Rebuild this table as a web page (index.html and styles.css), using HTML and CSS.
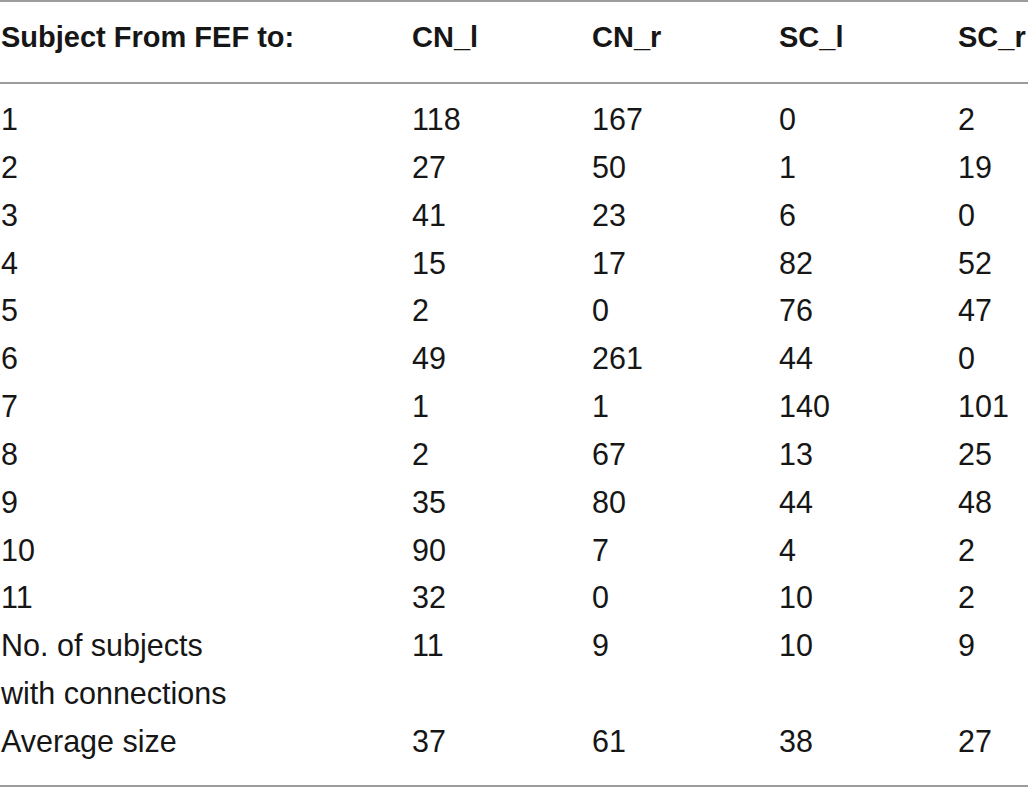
FILE: index.html
```html
<!DOCTYPE html>
<html>

<head>
    <meta charset="UTF-8">
    <title>Subject From FEF</title>
    <link rel="stylesheet" href="styles.css">
</head>

<body>
    <table class="data">
        <colgroup>
            <col class="c-name">
            <col class="c-cnl">
            <col class="c-cnr">
            <col class="c-scl">
            <col class="c-scr">
        </colgroup>
        <thead>
            <tr>
                <th>Subject From FEF to:</th>
                <th>CN_l</th>
                <th>CN_r</th>
                <th>SC_l</th>
                <th>SC_r</th>
            </tr>
        </thead>
        <tbody>
            <tr class="first"><td>1</td><td>118</td><td>167</td><td>0</td><td>2</td></tr>
            <tr><td>2</td><td>27</td><td>50</td><td>1</td><td>19</td></tr>
            <tr><td>3</td><td>41</td><td>23</td><td>6</td><td>0</td></tr>
            <tr><td>4</td><td>15</td><td>17</td><td>82</td><td>52</td></tr>
            <tr><td>5</td><td>2</td><td>0</td><td>76</td><td>47</td></tr>
            <tr><td>6</td><td>49</td><td>261</td><td>44</td><td>0</td></tr>
            <tr><td>7</td><td>1</td><td>1</td><td>140</td><td>101</td></tr>
            <tr><td>8</td><td>2</td><td>67</td><td>13</td><td>25</td></tr>
            <tr><td>9</td><td>35</td><td>80</td><td>44</td><td>48</td></tr>
            <tr><td>10</td><td>90</td><td>7</td><td>4</td><td>2</td></tr>
            <tr><td>11</td><td>32</td><td>0</td><td>10</td><td>2</td></tr>
            <tr><td>No. of subjects<br>with connections</td><td>11</td><td>9</td><td>10</td><td>9</td></tr>
            <tr class="last"><td>Average size</td><td>37</td><td>61</td><td>38</td><td>27</td></tr>
        </tbody>
    </table>
</body>

</html>
```

FILE: styles.css
```css
* {
    margin: 0;
    padding: 0;
}

body {
    background: #fff;
    color: #161616;
    font-family: "Liberation Sans", Arial, sans-serif;
}

.data {
    width: 1028px;
    table-layout: fixed;
    border-collapse: separate;
    border-spacing: 0;
    border-top: 2px solid #9c9c9c;
    border-bottom: 2px solid #9c9c9c;
}

.c-name {
    width: 412px;
}

.c-cnl {
    width: 180px;
}

.c-cnr {
    width: 187px;
}

.c-scl {
    width: 179px;
}

.c-scr {
    width: 70px;
}

.data th {
    font-size: 29px;
    font-weight: bold;
    text-align: left;
    line-height: 48px;
    padding-top: 11px;
    padding-bottom: 21px;
    border-bottom: 2px solid #9c9c9c;
    white-space: nowrap;
}

.data th:first-child {
    padding-left: 1px;
}

.data td {
    font-size: 30.5px;
    line-height: 47.85px;
    text-align: left;
    vertical-align: top;
    white-space: nowrap;
}

.data td:first-child {
    padding-left: 1px;
}

.data tr.first td {
    padding-top: 12px;
}

.data tr.last td {
    padding-bottom: 19px;
}
```
